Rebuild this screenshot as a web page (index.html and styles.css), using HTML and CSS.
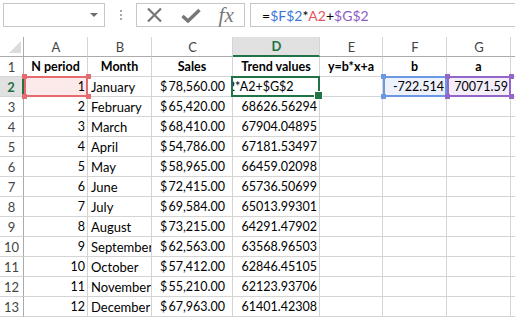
FILE: index.html
```html
<!DOCTYPE html>
<html lang="en">
<head>
    <meta charset="UTF-8">
    <title>Trend values</title>
    <link rel="stylesheet" href="styles.css">
</head>
<body>
    <div class="formula-bar">
        <div class="name-box"><span class="caret"></span></div>
        <div class="grip"><i></i><i></i><i></i></div>
        <div class="fx-buttons">
            <div class="btn">
                <svg width="17" height="16" viewBox="0 0 17 16"><path d="M2 1.5 L15 14.5 M15 1.5 L2 14.5" stroke="#777" stroke-width="2.2" fill="none"/></svg>
            </div>
            <div class="btn">
                <svg width="20" height="15" viewBox="0 0 20 15"><path d="M1.5 8 L7 13 L18.5 2" stroke="#777" stroke-width="3.4" fill="none"/></svg>
            </div>
            <div class="btn"><span class="fx">fx</span></div>
        </div>
        <div class="formula-input">=<span class="c-blue">$F$2</span>*<span class="c-red">A2</span>+<span class="c-purple">$G$2</span></div>
    </div>

    <div class="sheet">
        <!-- column headers -->
        <div class="cell corner"></div>
        <div class="cell hd">A</div>
        <div class="cell hd">B</div>
        <div class="cell hd">C</div>
        <div class="cell hd sel">D</div>
        <div class="cell hd">E</div>
        <div class="cell hd">F</div>
        <div class="cell hd">G</div>
        <div class="cell hd"></div>

        <div class="cell rh">1</div>
        <div class="cell title">N period</div>
        <div class="cell title">Month</div>
        <div class="cell title">Sales</div>
        <div class="cell title">Trend values</div>
        <div class="cell title">y=b*x+a</div>
        <div class="cell title">b</div>
        <div class="cell title">a</div>
        <div class="cell"></div>

        <div class="cell rh sel">2</div>
        <div class="cell num ref ref-red">1</div>
        <div class="cell">January</div>
        <div class="cell money"><span>$</span><span>78,560.00</span></div>
        <div class="cell active"><div class="edit-clip"><span class="edit">=$F$2*A2+$G$2</span></div></div>
        <div class="cell"></div>
        <div class="cell num ref ref-blue">-722.514</div>
        <div class="cell num ref ref-purple">70071.59</div>
        <div class="cell"></div>

        <div class="cell rh">3</div>
        <div class="cell num">2</div>
        <div class="cell">February</div>
        <div class="cell money"><span>$</span><span>65,420.00</span></div>
        <div class="cell num">68626.56294</div>
        <div class="cell"></div><div class="cell"></div><div class="cell"></div><div class="cell"></div>

        <div class="cell rh">4</div>
        <div class="cell num">3</div>
        <div class="cell">March</div>
        <div class="cell money"><span>$</span><span>68,410.00</span></div>
        <div class="cell num">67904.04895</div>
        <div class="cell"></div><div class="cell"></div><div class="cell"></div><div class="cell"></div>

        <div class="cell rh">5</div>
        <div class="cell num">4</div>
        <div class="cell">April</div>
        <div class="cell money"><span>$</span><span>54,786.00</span></div>
        <div class="cell num">67181.53497</div>
        <div class="cell"></div><div class="cell"></div><div class="cell"></div><div class="cell"></div>

        <div class="cell rh">6</div>
        <div class="cell num">5</div>
        <div class="cell">May</div>
        <div class="cell money"><span>$</span><span>58,965.00</span></div>
        <div class="cell num">66459.02098</div>
        <div class="cell"></div><div class="cell"></div><div class="cell"></div><div class="cell"></div>

        <div class="cell rh">7</div>
        <div class="cell num">6</div>
        <div class="cell">June</div>
        <div class="cell money"><span>$</span><span>72,415.00</span></div>
        <div class="cell num">65736.50699</div>
        <div class="cell"></div><div class="cell"></div><div class="cell"></div><div class="cell"></div>

        <div class="cell rh">8</div>
        <div class="cell num">7</div>
        <div class="cell">July</div>
        <div class="cell money"><span>$</span><span>69,584.00</span></div>
        <div class="cell num">65013.99301</div>
        <div class="cell"></div><div class="cell"></div><div class="cell"></div><div class="cell"></div>

        <div class="cell rh">9</div>
        <div class="cell num">8</div>
        <div class="cell">August</div>
        <div class="cell money"><span>$</span><span>73,215.00</span></div>
        <div class="cell num">64291.47902</div>
        <div class="cell"></div><div class="cell"></div><div class="cell"></div><div class="cell"></div>

        <div class="cell rh">10</div>
        <div class="cell num">9</div>
        <div class="cell">September</div>
        <div class="cell money"><span>$</span><span>62,563.00</span></div>
        <div class="cell num">63568.96503</div>
        <div class="cell"></div><div class="cell"></div><div class="cell"></div><div class="cell"></div>

        <div class="cell rh">11</div>
        <div class="cell num">10</div>
        <div class="cell">October</div>
        <div class="cell money"><span>$</span><span>57,412.00</span></div>
        <div class="cell num">62846.45105</div>
        <div class="cell"></div><div class="cell"></div><div class="cell"></div><div class="cell"></div>

        <div class="cell rh">12</div>
        <div class="cell num">11</div>
        <div class="cell">November</div>
        <div class="cell money"><span>$</span><span>55,210.00</span></div>
        <div class="cell num">62123.93706</div>
        <div class="cell"></div><div class="cell"></div><div class="cell"></div><div class="cell"></div>

        <div class="cell rh">13</div>
        <div class="cell num">12</div>
        <div class="cell">December</div>
        <div class="cell money"><span>$</span><span>67,963.00</span></div>
        <div class="cell num">61401.42308</div>
        <div class="cell"></div><div class="cell"></div><div class="cell"></div><div class="cell"></div>
    </div>
</body>
</html>
```

FILE: styles.css
```css
* {
    box-sizing: border-box;
}
body {
    margin: 0;
    font-family: Lato, "Liberation Sans", sans-serif;
    background-color: #fff;
    color: #000;
    overflow: hidden;
}

/* formula bar */
.formula-bar {
    display: flex;
    align-items: center;
    padding: 3px 0 0 3px;
    height: 27px;
    margin-bottom: 10px;
}
.name-box {
    width: 102px;
    height: 24px;
    border: 1px solid #c6c6c6;
    display: flex;
    align-items: center;
    justify-content: flex-end;
    padding-right: 6px;
}
.caret {
    border-left: 4px solid transparent;
    border-right: 4px solid transparent;
    border-top: 4px solid #6d6d6d;
}
.grip {
    width: 31px;
    display: flex;
    flex-direction: column;
    align-items: center;
    gap: 2px;
}
.grip i {
    width: 2px;
    height: 2px;
    background-color: #a8a8a8;
}
.fx-buttons {
    width: 109px;
    height: 24px;
    border: 1px solid #c6c6c6;
    display: flex;
}
.btn {
    flex: 1;
    display: flex;
    align-items: center;
    justify-content: center;
}
.fx {
    font-family: "Liberation Serif", serif;
    font-style: italic;
    font-size: 21px;
    color: #777;
    line-height: 1;
}
.formula-input {
    flex: 1;
    height: 24px;
    margin-left: 5px;
    padding-left: 11px;
    border: 1px solid #c6c6c6;
    border-right: none;
    display: flex;
    align-items: center;
    font-size: 14px;
}
.c-blue { color: #3d78d8; }
.c-red { color: #e5565c; }
.c-purple { color: #8c5cc4; }

/* sheet */
.sheet {
    display: grid;
    grid-template-columns: 24px 64px 64px 81px 87px 63px 64px 64px 1fr;
    grid-auto-rows: 20px;
    font-size: 13px;
}
.cell {
    border-right: 1px solid #d4d4d4;
    border-bottom: 1px solid #d4d4d4;
    padding: 0 2px 0 3px;
    display: flex;
    align-items: center;
    white-space: nowrap;
    overflow: hidden;
}
.corner {
    border-right-color: #ababab;
    border-bottom-color: #ababab;
    align-items: flex-end;
    justify-content: flex-end;
    padding: 0 2px 3px 0;
}
.corner::after {
    content: '';
    width: 12px;
    height: 12px;
    background-color: #dcdcdc;
    clip-path: polygon(100% 0, 100% 100%, 0 100%);
}
.hd {
    color: #444;
    justify-content: center;
    border-bottom-color: #ababab;
}
.hd.sel {
    background-color: #e1e1e1;
    color: #217346;
    font-weight: bold;
    border-bottom: 2px solid #217346;
}
.rh {
    color: #444;
    justify-content: center;
    border-right-color: #ababab;
    padding: 0;
}
.rh.sel {
    background-color: #e1e1e1;
    color: #217346;
    font-weight: bold;
    border-right: 2px solid #217346;
}
.title {
    font-size: 12.5px;
    font-weight: bold;
    justify-content: center;
    padding: 0;
}
.num {
    font-size: 12.5px;
    justify-content: flex-end;
}
.money {
    font-size: 12.5px;
    justify-content: space-between;
    padding: 0 7px 0 8px;
}

/* active cell being edited */
.active {
    font-size: 12.5px;
    position: relative;
    overflow: visible;
    padding: 0;
    z-index: 2;
}
.active::after {
    content: '';
    position: absolute;
    top: -1px;
    left: -2px;
    right: -1px;
    bottom: -1px;
    border: 2px solid #217346;
}
.active::before {
    content: '';
    position: absolute;
    right: -4px;
    bottom: -4px;
    width: 7px;
    height: 7px;
    background-color: #217346;
    border: 1px solid #fff;
    z-index: 1;
}
.edit-clip {
    flex: 1;
    overflow: hidden;
}
.edit {
    display: inline-block;
    margin-left: -34px;
}

/* formula reference highlights */
.ref {
    position: relative;
    overflow: visible;
    z-index: 1;
}
.ref::after {
    content: '';
    position: absolute;
    top: -1px;
    left: 0;
    right: -1px;
    bottom: -1px;
    border: 2px solid var(--ref);
}
.ref::before {
    content: '';
    position: absolute;
    left: -2px;
    top: -3px;
    width: 5px;
    height: 5px;
    background-color: var(--ref);
    box-shadow: 64px 0 0 var(--ref), 0 20px 0 var(--ref), 64px 20px 0 var(--ref);
    z-index: 1;
}
.ref-red {
    --ref: #e46c6e;
    background-color: #fce9e9;
}
.ref-blue {
    --ref: #6a98e2;
    background-color: #eef2fc;
}
.ref-purple {
    --ref: #9466c9;
    background-color: #f3eefa;
}
```
